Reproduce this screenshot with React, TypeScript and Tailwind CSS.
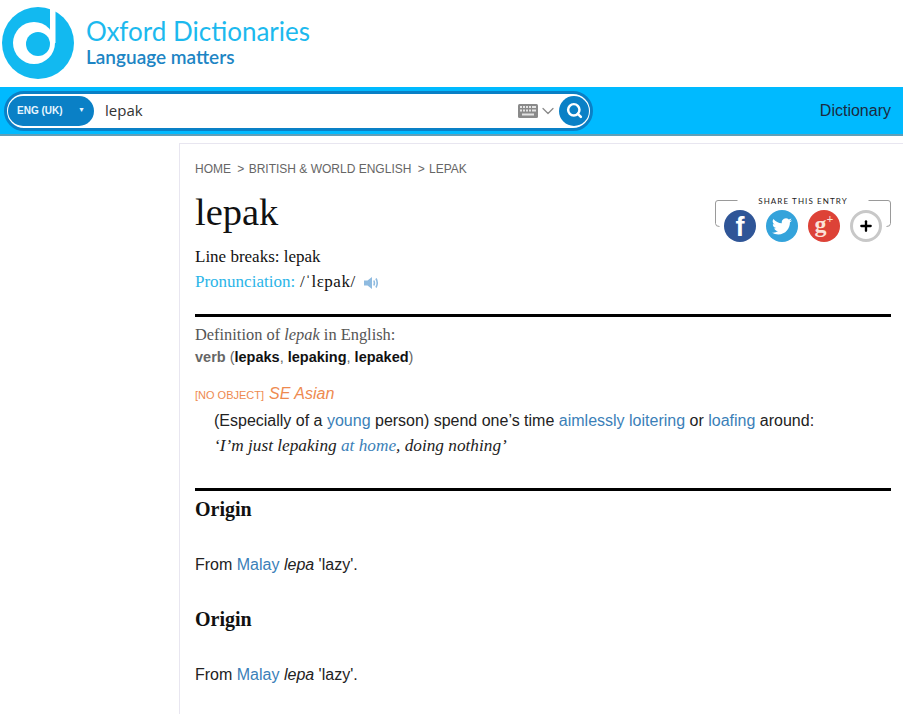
import React from 'react';
import { ChevronDown, Plus, Search } from 'lucide-react';

const serif = 'font-["Liberation_Serif",serif]';
const LINK = 'text-[#3b7fb8]';

const Logo = () => (
  <svg width="76" height="87" viewBox="0 0 76 87" className="shrink-0">
    <circle cx="38" cy="43" r="36" fill="#12b9f0" />
    <circle cx="34" cy="43" r="21" fill="#fff" />
    <rect x="50" y="0" width="5.500" height="43" fill="#fff" />
    <circle cx="38" cy="44" r="12" fill="#12b9f0" />
  </svg>
);

const KeyboardIcon = () => (
  <svg width="20" height="14" viewBox="0 0 20 14">
    <rect width="20" height="14" rx="1.500" fill="#8a8a8a" />
    <g fill="#e4e4e4">
      <rect x="2" y="2" width="2" height="2" />
      <rect x="5" y="2" width="2" height="2" />
      <rect x="8" y="2" width="2" height="2" />
      <rect x="11" y="2" width="2" height="2" />
      <rect x="14" y="2" width="4" height="2" />
      <rect x="2" y="5.500" width="2" height="2" />
      <rect x="5" y="5.500" width="2" height="2" />
      <rect x="8" y="5.500" width="2" height="2" />
      <rect x="11" y="5.500" width="2" height="2" />
      <rect x="14" y="5.500" width="4" height="2" />
      <rect x="4" y="9.500" width="12" height="2" />
    </g>
  </svg>
);

const SpeakerIcon = () => (
  <svg width="15" height="14" viewBox="0 0 15 14" className="ml-[8px] mt-[2px]">
    <path d="M0 4.500 H3.500 L8 1 V13 L3.500 9.500 H0 Z" fill="#8fbbe0" />
    <path d="M9.800 4.500 Q11 7 9.800 9.500 M12 2.500 Q14.500 7 12 11.500" stroke="#8fbbe0" strokeWidth="1.600" fill="none" />
  </svg>
);

const Bracket = ({ flip }: { flip?: boolean }) => (
  <svg width="23" height="27" viewBox="0 0 23 27" className={flip ? '-scale-x-100' : ''}>
    <path d="M22.500 .5 H3 Q.5 .5 .5 3 V23.500 Q.5 26.500 4.500 26.500" stroke="#9a9a9a" fill="none" />
  </svg>
);

const ShareCircle = ({ className, children }: { className: string; children: React.ReactNode }) => (
  <div className={`flex h-8 w-8 items-center justify-center rounded-full ${className}`}>{children}</div>
);

const ShareBox = () => (
  <div className="relative mt-[39px] h-[50px] w-[176px]">
    {/* bracket corners either side of the label */}
    <div className="absolute inset-x-0 top-0 flex justify-between">
      <Bracket />
      <Bracket flip />
    </div>
    <div className="h-[10px] -translate-y-[4px] text-center font-['Lato',sans-serif] text-[8px] leading-[10px] tracking-[1.100px] text-[#222]">
      SHARE THIS ENTRY
    </div>
    <div className="relative flex justify-center gap-[10px] pt-0">
      <ShareCircle className="bg-[#2f5597]">
        <span className="translate-y-[1px] font-['Liberation_Sans',sans-serif] text-[27px] font-bold leading-none text-white">f</span>
      </ShareCircle>
      <ShareCircle className="bg-[#34a3db]">
        <svg width="20" height="17" viewBox="0 0 24 20" fill="#fff">
          <path d="M24 2.400a9.800 9.800 0 0 1-2.800.8 4.900 4.900 0 0 0 2.100-2.700 9.800 9.800 0 0 1-3.100 1.200A4.900 4.900 0 0 0 11.800 6.100 14 14 0 0 1 1.700 1a4.900 4.900 0 0 0 1.500 6.600 4.900 4.900 0 0 1-2.200-.6v.1a4.900 4.900 0 0 0 3.900 4.800 4.900 4.900 0 0 1-2.200.1 4.900 4.900 0 0 0 4.600 3.400A9.900 9.900 0 0 1 0 17.400 14 14 0 0 0 7.500 19.600c9.100 0 14-7.500 14-14v-.6A10 10 0 0 0 24 2.400z" />
        </svg>
      </ShareCircle>
      <ShareCircle className="bg-[#dd4237]">
        <span className="flex -translate-y-[2px] font-['Liberation_Serif',serif] text-[24px] font-bold leading-none text-[#fbe3d8]">
          g<span className="text-[12px] font-bold leading-[14px]">+</span>
        </span>
      </ShareCircle>
      <ShareCircle className="border-[3px] border-[#c8c8c8] bg-white">
        <Plus size={16} strokeWidth={3.500} color="#000" />
      </ShareCircle>
    </div>
  </div>
);

const Origin = () => (
  <section>
    <h2 className={`${serif} text-[20px] font-bold leading-[24px] text-[#111]`}>Origin</h2>
    <p className="mt-[33px] text-[16px] leading-[22px] text-[#222]">
      From <span className={LINK}>Malay</span> <em>lepa</em> 'lazy'.
    </p>
  </section>
);

export default function App() {
  return (
    <div className="flex h-[714px] w-[903px] flex-col overflow-hidden bg-white font-['Liberation_Sans',sans-serif]">
      <header className="flex h-[87px] shrink-0 items-center gap-[10px]">
        <Logo />
        <div className="mb-[4px] font-['Lato',sans-serif]">
          <div className="text-[26px] leading-[30px] text-[#1cb9ee]">Oxford Dictionaries</div>
          <div className="text-[19px] font-semibold leading-[22px] text-[#1d85c4]">Language matters</div>
        </div>
      </header>

      <nav className="flex h-[49px] shrink-0 items-center justify-between border-b-2 border-[#5f9fb8] bg-[#00baff] pl-[4px] pr-[12px]">
        <div className="flex h-[40px] w-[589px] items-center rounded-full border-[3px] border-[#0a80c6] bg-white pl-px pr-px">
          <div className="flex h-[30px] w-[86px] items-center justify-between rounded-full bg-[#0a80c6] pl-[9px] pr-[9px] text-[10px] font-bold text-[#e8f6ff]">
            ENG (UK)
            <span className="text-[7px]">▼</span>
          </div>
          <span className="ml-[11px] flex-1 font-['Open_Sans',sans-serif] text-[15px] text-[#333]">lepak</span>
          <KeyboardIcon />
          <ChevronDown size={20} strokeWidth={1.500} color="#8a8a8a" />
          <div className="ml-px flex h-[30px] w-[30px] items-center justify-center rounded-full bg-[#0a80c6]">
            <Search size={17} strokeWidth={3.500} color="#fff" />
          </div>
        </div>
        <span className="text-[16px] text-[#1c2a3f]">Dictionary</span>
      </nav>

      <main className="ml-[179px] mt-[7px] flex-1 border-l border-t border-[#e8e6f0] pl-[15px] pr-[12px] pt-[17px]">
        <div className="flex justify-between">
          <div>
            <div className="text-[12px] leading-[16px] text-[#666]">
              HOME <span className="ml-[3px] mr-[1px]">&gt;</span> BRITISH &amp; WORLD ENGLISH <span className="ml-[3px] mr-[1px]">&gt;</span> LEPAK
            </div>
            <h1 className={`${serif} mt-[13px] text-[38.500px] leading-[44px] text-[#111]`}>lepak</h1>
            <div className={`${serif} mt-[13px] text-[17px] leading-[20px] text-[#111]`}>Line breaks: lepak</div>
            <div className={`${serif} mt-[5px] flex items-center text-[17px] leading-[20px] text-[#111]`}>
              <span className="text-[#2bb5e8]">Pronunciation:</span>
              <span className="ml-[5px] tracking-[0.500px]">/ˈlɛpak/</span>
              <SpeakerIcon />
            </div>
          </div>
          <ShareBox />
        </div>

        <div className="mt-[22px] border-t-[3px] border-black pt-[8px]">
          <div className={`${serif} text-[16.400px] leading-[20px] text-[#555]`}>
            Definition of <em>lepak</em> in English:
          </div>
          <div className="mt-[2px] text-[14.500px] leading-[20px] text-[#666]">
            <b>verb</b> (<b className="text-[#111]">lepaks</b>, <b className="text-[#111]">lepaking</b>, <b className="text-[#111]">lepaked</b>)
          </div>
          <div className="mt-[16px] flex items-baseline gap-[5px] text-[#ee8a4f]">
            <span className="text-[11px]">[NO OBJECT]</span>
            <em className="text-[16px] leading-[22px]">SE Asian</em>
          </div>
          <div className="pl-[19px]">
            <p className="mt-[5px] text-[16px] leading-[22px] text-[#222]">
              (Especially of a <span className={LINK}>young</span> person) spend one’s time <span className={LINK}>aimlessly</span> <span className={LINK}>loitering</span> or <span className={LINK}>loafing</span> around:
            </p>
            <p className={`${serif} mt-[3px] text-[17.250px] italic leading-[22px] text-[#222]`}>
              ‘I’m just lepaking <span className={LINK}>at home</span>, doing nothing’
            </p>
          </div>
        </div>

        <div className="mt-[31px] border-t-[3px] border-black pt-[6px]">
          <Origin />
        </div>
        <div className="mt-[31px]">
          <Origin />
        </div>
      </main>
    </div>
  );
}
